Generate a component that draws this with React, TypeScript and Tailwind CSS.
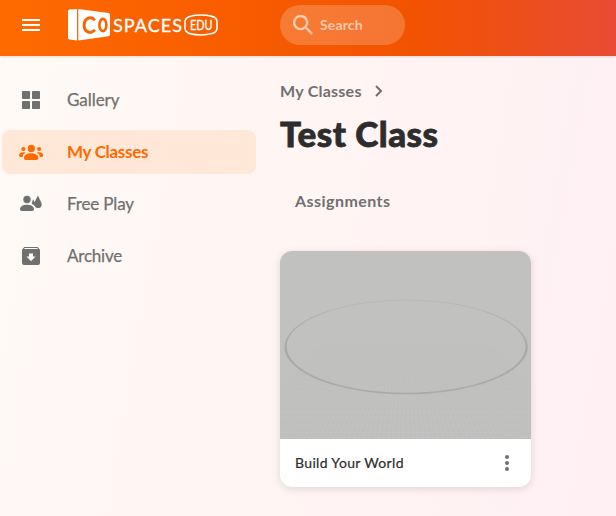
import React from "react";

function Logo() {
  return (
    <svg width="152" height="36" viewBox="67 7 152 36" className="ml-[27px] shrink-0" aria-label="CoSpaces Edu">
      <path d="M68 11.2Q68 9.8 69.5 9.6L77 9V40.5L69.5 39.6Q68 39.4 68 38Z" fill="#fff" />
      <path d="M78.3 9L108.5 13Q110 13.2 110 14.7V34.5Q110 36 108.5 36.2L78.3 40.5Z" fill="#fff" />
      <ellipse cx="102.9" cy="25" rx="3.5" ry="6.1" fill="none" stroke="#fa6400" strokeWidth="2.6" />
      <path d="M94.6 20.3C93.4 17.8 90.3 17.1 87.8 18.4C82.9 21 82.9 29.4 87.8 31.8C90.3 33 93.4 32.2 94.6 29.7" fill="none" stroke="#fa6400" strokeWidth="3" />
      <text x="113" y="32" fill="#fff" fontFamily="Lato, sans-serif" fontSize="18" textLength="69" stroke="#fff" strokeWidth=".35">SPACES</text>
      <path d="M190 16.4Q201 13.7 212 16.4Q217 17.7 217 22V28Q217 32.3 212 33.6Q201 36.3 190 33.6Q185 32.3 185 28V22Q185 17.7 190 16.4Z" fill="none" stroke="#fff" strokeWidth="1.6" />
      <text x="190" y="29.8" fill="#fff" fontFamily="Lato, sans-serif" fontSize="12.5" textLength="22.5" lengthAdjust="spacingAndGlyphs" stroke="#fff" strokeWidth=".3">EDU</text>
    </svg>
  );
}

const icons = {
  gallery: (
    <g>
      <rect x="3" y="3" width="8" height="8" rx=".8" />
      <rect x="13" y="3" width="8" height="8" rx=".8" />
      <rect x="3" y="13" width="8" height="8" rx=".8" />
      <rect x="13" y="13" width="8" height="8" rx=".8" />
    </g>
  ),
  classes: (
    <g>
      <circle cx="12.3" cy="8.4" r="3.6" />
      <circle cx="4.4" cy="9" r="2.1" />
      <circle cx="20.2" cy="9" r="2.1" />
      <path d="M5 18.2C5 14.8 8.4 13.3 12 13.3S19.4 14.8 19.4 18.2Q19.4 20 17.6 20H6.8Q5 20 5 18.2Z" />
      <path d="M0 15.6C0 12.7 3.6 11.7 6.7 12.6C4.7 13.9 3.9 14.7 3.6 17H1.4Q0 17 0 15.6ZM24.2 15.6C24.2 12.7 20.8 11.7 17.7 12.6C19.7 13.9 20.5 14.7 20.8 17H22.8Q24.2 17 24.2 15.6Z" />
    </g>
  ),
  play: (
    <g>
      <circle cx="8" cy="7.5" r="3.7" />
      <path d="M1 17.2C1 14.2 4.6 12.8 8 12.8S15 14.2 15 17.2Q15 19 13.2 19H2.8Q1 19 1 17.2Z" />
      <path d="M12.7 11.7Q13.4 8.4 14.2 7.3L15.6 10.3Q17 7 19 3.6Q20.5 7.2 22.2 10.5C23.8 14.2 21.4 16.2 18.7 16C17.1 16 16.3 15.2 15.8 14C14.9 13 13.7 12.4 12.7 11.7Z" />
    </g>
  ),
  archive: (
    <path fillRule="evenodd" d="M5.3 3H18.7L21 5.7V19Q21 21 19 21H5Q3 21 3 19V5.7ZM5.8 4L5 5H19L18.2 4ZM10 9.5V12.5H7.5L12 17.2L16.5 12.5H14V9.5Z" />
  ),
};

function NavItem({ icon, label, active = false, spacing }: { icon: keyof typeof icons; label: string; active?: boolean; spacing: string }) {
  return (
    <a className={`flex h-11 items-center rounded-lg pl-[17px] ${active ? "bg-[#ffe8d7] font-bold text-[#ff6a00]" : "text-[#707070] [-webkit-text-stroke:0.25px_#707070]"}`}>
      <svg width="24" height="24" viewBox="0 0 24 24" fill="currentColor" className="shrink-0 overflow-visible">{icons[icon]}</svg>
      <span className={`ml-6 text-[17px] leading-6 ${spacing}`}>{label}</span>
    </a>
  );
}

function Scene() {
  const rays = Array.from({ length: 75 }, (_, i) => i - 37);
  const rows = Array.from({ length: 22 }, (_, i) => 96 + i * i * 0.19);
  return (
    <svg width="251" height="188" viewBox="0 0 251 188" className="block bg-[#c1c1bf]">
      <defs>
        <linearGradient id="ring" x1="0" y1="0" x2="0" y2="1">
          <stop offset="0" stopColor="#b8b8b7" />
          <stop offset=".5" stopColor="#a8a8a9" />
          <stop offset="1" stopColor="#aaaaab" />
        </linearGradient>
        <linearGradient id="grid" gradientUnits="userSpaceOnUse" x1="0" y1="45" x2="0" y2="188">
          <stop offset="0" stopColor="#9da1a8" stopOpacity="0" />
          <stop offset="1" stopColor="#9da1a8" stopOpacity=".28" />
        </linearGradient>
      </defs>
      <g stroke="url(#grid)" strokeWidth=".4">
        {rays.map((i) => <path key={i} d={`M${125.5 + i * 0.9} 48L${125.7 + i * 5} 188`} />)}
        <g strokeWidth=".2">{rows.map((y) => <path key={y} d={`M0 ${y}L251 ${y + 0.1}`} />)}</g>
      </g>
      <path fill="url(#ring)" fillRule="evenodd" d="M4.4 96A121.7 47.3 0 0 1 247.8 96A121.7 47.3 0 0 1 4.4 96ZM6.6 95.6A119.5 46.1 0 0 1 245.6 95.6A119.5 46.1 0 0 1 6.6 95.6Z" />
    </svg>
  );
}

export default function App() {
  return (
    <div className="flex h-[516px] w-[616px] flex-col overflow-hidden bg-[linear-gradient(100deg,#fffaf5_0%,#fff5f3_50%,#fff0f4_100%)] font-['Lato',sans-serif]">
      <header className="z-10 flex h-14 shrink-0 items-center bg-[linear-gradient(90deg,#ff6a00_0%,#f25300_67%,#e94b35_100%)] pb-1.5 pl-[22px] shadow-[0_1px_2px_#0000001f]">
        <svg width="18" height="12" viewBox="0 0 18 12" fill="#fff" className="shrink-0"><path d="M0 0H18V2H0ZM0 5H18V7H0ZM0 10H18V12H0Z" /></svg>
        <Logo />
        <div className="ml-[61px] flex h-10 w-[125px] items-center rounded-full bg-white/20 pl-[13px] text-white/60">
          <svg width="20" height="20" viewBox="0 0 20 20" fill="none" stroke="currentColor" className="shrink-0"><path d="M12.2 12.2A6.5 6.5 0 1 1 12.3 12.1L19 18.8" strokeWidth="2.4" /></svg>
          <span className="ml-[7px] text-sm font-bold tracking-[0.15px]">Search</span>
        </div>
      </header>
      <div className="flex min-h-0 flex-1">
        <nav className="flex w-[256px] shrink-0 flex-col gap-2 pl-0.5 pt-[22px]">
          <NavItem icon="gallery" label="Gallery" spacing="tracking-[-0.05px]" />
          <NavItem icon="classes" label="My Classes" active spacing="tracking-[-0.3px]" />
          <NavItem icon="play" label="Free Play" spacing="tracking-[-0.15px]" />
          <NavItem icon="archive" label="Archive" spacing="tracking-[-0.2px]" />
        </nav>
        <main className="pl-6 pt-[23px]">
          <div className="flex h-6 items-center text-base font-bold text-[#707070]">
            <span className="tracking-[0.25px]">My Classes</span>
            <svg width="8" height="12" viewBox="0 0 8 12" fill="none" stroke="currentColor" strokeWidth="2" className="ml-[13px]"><path d="M1 1L6 6L1 11" /></svg>
          </div>
          <h1 className="mt-[10px] text-[35px] font-black leading-10 tracking-[0.5px] text-[#2d2d2d] [-webkit-text-stroke:0.8px_#2d2d2d]">Test Class</h1>
          <h2 className="ml-[15px] mt-9 text-base font-bold leading-6 tracking-[0.45px] text-[#707070]">Assignments</h2>
          <section className="mt-[38px] w-[251px] overflow-hidden rounded-xl bg-white shadow-[0_2px_8px_#00000020]">
            <Scene />
            <div className="flex h-12 items-center justify-between pl-[15px] pr-[22px] text-[#2d2d2d]">
              <span className="text-sm tracking-[0.35px] [-webkit-text-stroke:0.2px_#2d2d2d]">Build Your World</span>
              <svg width="4" height="16" viewBox="0 0 4 16" fill="#707070"><circle cx="2" cy="2" r="2" /><circle cx="2" cy="8" r="2" /><circle cx="2" cy="14" r="2" /></svg>
            </div>
          </section>
        </main>
      </div>
    </div>
  );
}
